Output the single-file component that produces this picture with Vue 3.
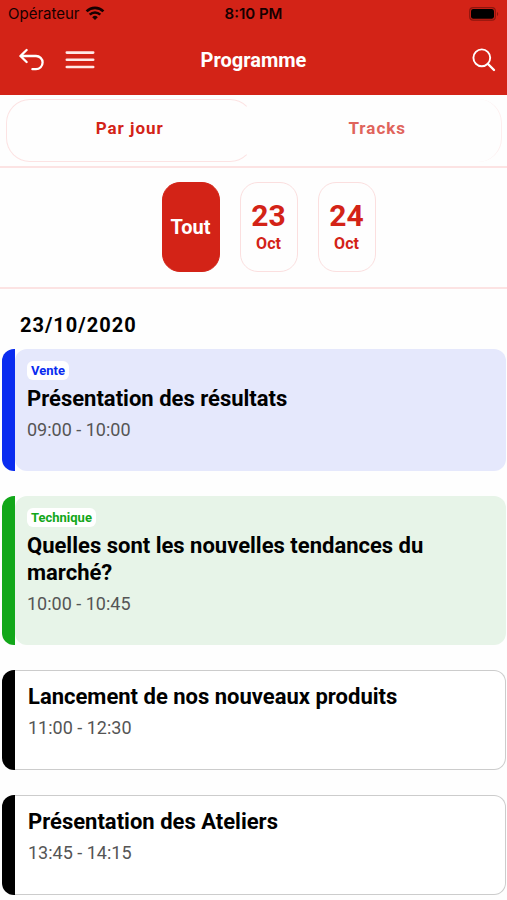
<template>
  <div class="app">
    <header class="top">
      <div class="status-bar">
        <div class="carrier">
          <span>Opérateur</span>
          <svg width="20" height="15" viewBox="0 0 20 15" aria-hidden="true">
            <path d="M1.600 5.400a12 12 0 0 1 16.800 0" fill="none" stroke="#160000" stroke-width="2.700" />
            <path d="M4.700 8.700a7.600 7.600 0 0 1 10.600 0" fill="none" stroke="#160000" stroke-width="2.500" />
            <path d="M7.200 11.200a4 4 0 0 1 5.600 0L10 14z" fill="#160000" />
          </svg>
        </div>
        <span class="clock">8:10 PM</span>
        <svg class="battery" width="30" height="14" viewBox="0 0 30 14" aria-hidden="true">
          <rect x="0.700" y="0.700" width="25.600" height="12.400" rx="3.400" fill="none" stroke="#8c160e" stroke-width="1.200" />
          <rect x="2" y="2" width="23" height="9.800" rx="2.200" fill="#000" />
          <path d="M28 5v4c1.600-.6 1.600-3.400 0-4z" fill="#8c160e" />
        </svg>
      </div>
      <div class="nav-bar">
        <div class="nav-left">
          <button type="button" class="icon-btn" aria-label="Retour">
            <svg width="26" height="24" viewBox="0 0 26 24">
              <path d="M7.600 2L1.400 8l6.200 6M2 8h15a6.600 6.600 0 0 1 0 13.200h-3.600" fill="none" stroke="#fff" stroke-width="2.300" stroke-linecap="round" stroke-linejoin="round" />
            </svg>
          </button>
          <button type="button" class="icon-btn" aria-label="Menu">
            <svg width="30" height="20" viewBox="0 0 30 20">
              <path d="M1.800 2.600h26.400M1.800 9.800h26.400M1.800 17h26.400" stroke="#ffe9e7" stroke-width="2.600" stroke-linecap="round" />
            </svg>
          </button>
        </div>
        <h1 class="nav-title">Programme</h1>
        <button type="button" class="icon-btn nav-right" aria-label="Rechercher">
          <svg width="24" height="24" viewBox="0 0 24 24">
            <circle cx="9.800" cy="9.800" r="8.400" fill="none" stroke="#fff" stroke-width="1.900" />
            <path d="M16 16l6 6" stroke="#fff" stroke-width="2.400" stroke-linecap="round" />
          </svg>
        </button>
      </div>
    </header>

    <nav class="tabs">
      <div class="tabs-inner">
        <button
          v-for="tab in tabs"
          :key="tab"
          type="button"
          class="tab"
          :class="{ active: tab === currentTab }"
          @click="currentTab = tab"
        >
          {{ tab }}
        </button>
      </div>
    </nav>

    <div class="days">
      <button
        v-for="day in days"
        :key="day.id"
        type="button"
        class="day"
        :class="{ selected: day.id === currentDay }"
        @click="currentDay = day.id"
      >
        <span v-if="day.number" class="day-number">{{ day.number }}</span>
        <span :class="day.number ? 'day-month' : 'day-all'">{{ day.label }}</span>
      </button>
    </div>

    <main class="sessions">
      <h2 class="date">23/10/2020</h2>
      <article v-for="s in sessions" :key="s.title" class="session" :class="s.type">
        <div class="session-bar"></div>
        <div class="session-body">
          <span v-if="s.tag" class="tag">{{ s.tag }}</span>
          <h3 class="session-title">{{ s.title }}</h3>
          <p class="session-time">{{ s.time }}</p>
        </div>
      </article>
    </main>
  </div>
</template>

<script setup>
import { ref } from 'vue';

const tabs = ['Par jour', 'Tracks'];
const currentTab = ref('Par jour');

const days = [
  { id: 'all', label: 'Tout' },
  { id: '23', number: '23', label: 'Oct' },
  { id: '24', number: '24', label: 'Oct' }
];
const currentDay = ref('all');

const sessions = [
  { type: 'vente', tag: 'Vente', title: 'Présentation des résultats', time: '09:00 - 10:00' },
  { type: 'technique', tag: 'Technique', title: 'Quelles sont les nouvelles tendances du marché?', time: '10:00 - 10:45' },
  { type: 'plain', title: 'Lancement de nos nouveaux produits', time: '11:00 - 12:30' },
  { type: 'plain', title: 'Présentation des Ateliers', time: '13:45 - 14:15' }
];
</script>

<style>
body {
  margin: 0;
  background: #fefefe;
}
</style>

<style scoped>
.app {
  font-family: Roboto, "Liberation Sans", sans-serif;
  color: #000;
}

h1,
h2,
h3,
p {
  margin: 0;
}

button {
  font-family: inherit;
  padding: 0;
  border: none;
  background: none;
  cursor: pointer;
}

svg {
  display: block;
}

/* header */
.top {
  background: #d32317;
}

.status-bar,
.nav-bar {
  display: grid;
  grid-template-columns: 1fr auto 1fr;
  align-items: center;
}

.status-bar {
  height: 27px;
  padding: 0 8px;
  font-family: Roboto, sans-serif;
  font-size: 15px;
  color: #160000;
}

.carrier {
  display: flex;
  align-items: center;
  gap: 5px;
  font-family: Inter, sans-serif;
}

.clock {
  font-family: Inter, sans-serif;
  font-weight: 600;
}

.battery {
  justify-self: end;
}

.nav-bar {
  height: 68px;
  padding: 0 11px 2px;
  box-sizing: border-box;
}

.nav-left {
  display: flex;
  align-items: center;
  gap: 20px;
  padding-left: 8px;
}

.nav-title {
  font-size: 20px;
  font-weight: 700;
  color: #fff;
}

.nav-right {
  justify-self: end;
}

/* tabs */
.tabs {
  padding: 4px 5px 4px 6px;
  border-bottom: 2px solid #fce3e3;
}

.tabs-inner {
  display: flex;
  border-right: 1px solid #fdeeee;
  border-radius: 24px;
}

.tab {
  flex: 1;
  height: 63px;
  padding-bottom: 5px;
  box-sizing: border-box;
  border: 1px solid transparent;
  border-radius: 24px;
  font-size: 17px;
  font-weight: 700;
  letter-spacing: 1px;
  color: #e0645c;
}

.tab.active {
  border-color: #fce3e3;
  border-right-color: transparent;
  color: #d32317;
}

/* day picker */
.days {
  display: flex;
  justify-content: center;
  gap: 20px;
  padding: 14px 0 15px 30px;
  border-bottom: 2px solid #fce3e3;
}

.day {
  display: flex;
  flex-direction: column;
  align-items: center;
  justify-content: center;
  width: 58px;
  height: 90px;
  box-sizing: border-box;
  border: 1px solid #fbdfdf;
  border-radius: 18px;
  color: #d32317;
  font-weight: 700;
}

.day.selected {
  background: #d32317;
  border-color: #d32317;
  color: #fff;
}

.day-number {
  padding-top: 2px;
  font-size: 30px;
  line-height: 32px;
}

.day-month {
  font-size: 16px;
  line-height: 24px;
}

.day-all {
  font-size: 20px;
}

/* sessions */
.sessions {
  display: flex;
  flex-direction: column;
  gap: 25px;
  padding: 24px 1px 6px 2px;
}

.date {
  margin: 0 0 -13px 18px;
  font-size: 20px;
  line-height: 24px;
  font-weight: 700;
  letter-spacing: 1px;
}

.session {
  display: flex;
}

.session-bar {
  width: 13px;
  border-radius: 12px 0 0 12px;
  background: var(--accent);
}

.session-body {
  flex: 1;
  padding: 12px 60px 30px 12px;
  border-radius: 12px;
  background: var(--tint);
}

.vente {
  --accent: #0a2cf0;
  --tint: #e5e8fc;
}

.technique {
  --accent: #12a71a;
  --tint: #e7f4e8;
}

.plain {
  --accent: #000;
  --tint: #fff;
}

.plain .session-body {
  padding-left: 13px;
  border: 1px solid #ccc;
  border-left: none;
  border-radius: 0 12px 12px 0;
}

.tag {
  display: block;
  width: fit-content;
  margin-bottom: 5px;
  padding: 0 4px;
  border-radius: 6px;
  background: #fff;
  color: var(--accent);
  font-size: 13px;
  line-height: 19px;
  font-weight: 700;
}

.session-title {
  font-size: 22px;
  line-height: 27px;
  font-weight: 700;
}

.session-time {
  margin-top: 7px;
  font-size: 18px;
  line-height: 22px;
  color: #555;
}
</style>
